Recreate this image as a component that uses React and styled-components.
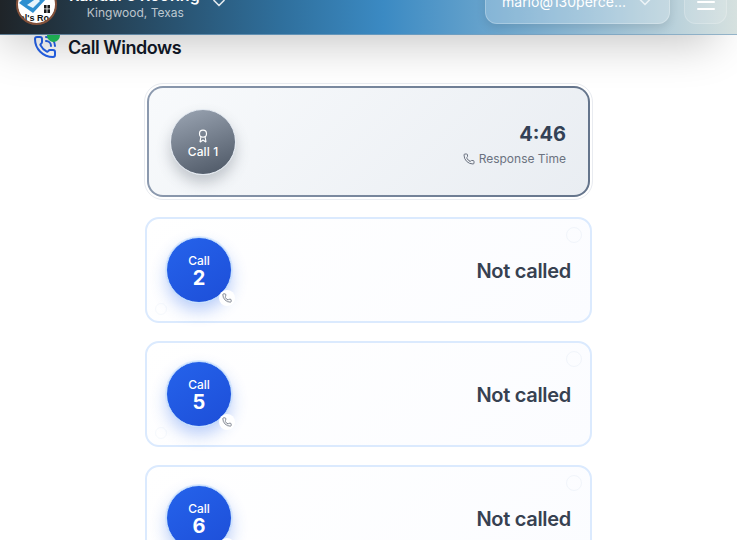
import React from "react";
import styled, { createGlobalStyle } from "styled-components";
import { Award, ChevronDown, Menu, Phone, PhoneCall } from "lucide-react";

const GlobalStyle = createGlobalStyle`
  html, body {
    margin: 0;
    height: 100%;
    overflow: hidden;
    background: #fff;
    font-family: Inter, "Liberation Sans", sans-serif;
  }
`;

const calls = [
  { id: 2, status: "Not called" },
  { id: 5, status: "Not called" },
  { id: 6, status: "Not called" },
];

const Logo = () => (
  <LogoWrap>
    <svg width="41" height="41" viewBox="0 0 41 41">
      <defs>
        <clipPath id="logoClip">
          <circle cx="20.5" cy="20.5" r="19" />
        </clipPath>
      </defs>
      <g clipPath="url(#logoClip)">
        <rect width="41" height="41" fill="#fff" />
        <path d="M3 19 L20 2 L31 14 L17 29 Z" fill="#2f8fd0" />
        <path d="M11 21 L21 14 L24 17 L17 24 Z" fill="#e8f4fb" />
        <rect x="28" y="21" width="6" height="8" fill="#1a1a1a" />
        <rect x="30.6" y="21" width="0.8" height="8" fill="#fff" />
        <rect x="28" y="24.5" width="6" height="0.8" fill="#fff" />
        <text x="33" y="37.2" textAnchor="end" fontFamily="Liberation Sans" fontWeight="700" fontSize="9" fill="#111">dal's Ro</text>
      </g>
      <circle cx="20.5" cy="20.5" r="19.5" fill="none" stroke="#84513a" strokeWidth="2" />
    </svg>
  </LogoWrap>
);

export default function App() {
  return (
    <>
      <GlobalStyle />
      <Page>
        <Header>
          <Logo />
          <Company>
            <NameRow>
              <CompanyName>Randal's Roofing</CompanyName>
              <NameChevron size={20} />
            </NameRow>
            <Location>Kingwood, Texas</Location>
          </Company>
          <Spacer />
          <UserPill>
            <Email>mario@130perce...</Email>
            <ChevronDown size={20} color="rgba(255,255,255,0.7)" />
          </UserPill>
          <MenuButton>
            <Menu size={24} />
          </MenuButton>
        </Header>
        <SectionTitle>
          <TitleIcon>
            <PhoneCall size={24} color="#2563eb" />
            <GreenDot />
          </TitleIcon>
          Call Windows
        </SectionTitle>
        <CardList>
          <ActiveCardRing>
            <ActiveCard>
              <GrayCircle>
                <Award size={14} />
                <span>Call 1</span>
              </GrayCircle>
              <ResponseInfo>
                <ResponseValue>4:46</ResponseValue>
                <ResponseLabel>
                  <Phone size={12} />
                  Response Time
                </ResponseLabel>
              </ResponseInfo>
            </ActiveCard>
          </ActiveCardRing>
          {calls.map((call) => (
            <CallCard key={call.id}>
              <CornerDot />
              <BottomDot />
              <BlueCircle>
                <CallWord>Call</CallWord>
                <CallNumber>{call.id}</CallNumber>
                <PhoneBadge>
                  <Phone size={10} />
                </PhoneBadge>
              </BlueCircle>
              <Status>{call.status}</Status>
            </CallCard>
          ))}
        </CardList>
      </Page>
    </>
  );
}

const Page = styled.div`
  height: 540px;
  overflow: hidden;
`;

/* the page is scrolled down: most of the header sits above the window */
const Header = styled.header`
  position: relative;
  z-index: 2;
  height: 105px;
  margin-top: -70px;
  box-sizing: border-box;
  display: flex;
  align-items: flex-end;
  padding: 0 10px 11px 16px;
  background: linear-gradient(90deg, #1f2428 0%, #2f6f9c 38%, #3b8ac3 52%, #8cb8d4 78%, #d6e1df 100%);
  border-bottom: 1px solid rgba(120, 160, 190, 0.7);
  box-shadow: -10px 20px 45px -12px rgba(0, 0, 0, 0.23);
`;

const LogoWrap = styled.div`
  width: 41px;
  height: 41px;
  flex: none;
  margin-bottom: -2px;
`;

const Company = styled.div`
  margin-left: 12px;
  display: flex;
  flex-direction: column;
  align-items: center;
  color: #fff;
`;

const NameRow = styled.div`
  display: flex;
  align-items: center;
  gap: 9px;
`;

const NameChevron = styled(ChevronDown)`
  margin-bottom: -15px;
  color: rgba(255, 255, 255, 0.85);
`;

const CompanyName = styled.div`
  font-size: 16px;
  line-height: 20px;
  font-weight: 600;
`;

const Location = styled.div`
  font-size: 12px;
  line-height: 16px;
  margin: 0 27px 2px 0;
  color: rgba(255, 255, 255, 0.7);
`;

const Spacer = styled.div`
  flex: 1;
`;

const UserPill = styled.div`
  width: 185px;
  height: 48px;
  box-sizing: border-box;
  margin-bottom: -1px;
  padding: 3px 14px 0 16px;
  display: flex;
  align-items: center;
  justify-content: space-between;
  color: #fff;
  border-radius: 12px;
  background: rgba(255, 255, 255, 0.2);
  border: 1px solid rgba(255, 255, 255, 0.25);
  box-shadow: 0 4px 10px rgba(0, 0, 0, 0.1);
`;

const Email = styled.span`
  font-size: 14px;
`;

const MenuButton = styled.div`
  width: 43px;
  height: 48px;
  margin: 0 0 -1px 14px;
  padding-top: 3px;
  box-sizing: border-box;
  display: flex;
  align-items: center;
  justify-content: center;
  color: #fff;
  border-radius: 12px;
  background: rgba(255, 255, 255, 0.12);
  border: 1px solid rgba(255, 255, 255, 0.2);
`;

const SectionTitle = styled.div`
  display: flex;
  align-items: center;
  gap: 11px;
  height: 24px;
  padding-left: 33px;
  font-size: 18px;
  font-weight: 600;
  letter-spacing: -0.45px;
  color: #111827;
`;

const TitleIcon = styled.div`
  position: relative;
  width: 24px;
  height: 24px;
`;

const GreenDot = styled.span`
  position: absolute;
  top: -6px;
  right: -3px;
  width: 13px;
  height: 13px;
  border-radius: 50%;
  background: #22c55e;
`;

const CardList = styled.div`
  position: relative;
  width: 447px;
  margin: 24px auto 0;
  display: flex;
  flex-direction: column;
  gap: 18px;
`;

const ActiveCardRing = styled.div`
  padding: 2px;
  margin: 0 -1px -1px;
  border-radius: 19px;
  background: #fff;
  border: 1px solid #e8ebf0;
`;

const ActiveCard = styled.div`
  height: 111px;
  box-sizing: border-box;
  padding: 0 22px 0 21px;
  display: flex;
  align-items: center;
  justify-content: space-between;
  border-radius: 16px;
  border: 2px solid transparent;
  background:
    linear-gradient(135deg, #f8fafc, #e9edf2) padding-box,
    linear-gradient(90deg, #8b99ae, #64748b) border-box;
`;

const Circle = styled.div`
  position: relative;
  display: flex;
  flex-direction: column;
  align-items: center;
  justify-content: center;
  border-radius: 50%;
  color: #fff;
  flex: none;
`;

const GrayCircle = styled(Circle)`
  width: 66px;
  height: 66px;
  box-sizing: border-box;
  padding-top: 5px;
  gap: 1px;
  font-size: 12px;
  font-weight: 500;
  line-height: 16px;
  letter-spacing: 0.1px;
  background: linear-gradient(160deg, #9ca6b4, #4b5563);
  border: 1px solid #e2e8f0;
  box-shadow: 0 8px 14px rgba(75, 85, 99, 0.3);
`;

const ResponseInfo = styled.div`
  display: flex;
  flex-direction: column;
  align-items: flex-end;
  gap: 3px;
  margin-top: 4px;
`;

const ResponseValue = styled.div`
  font-size: 20px;
  line-height: 28px;
  font-weight: 700;
  color: #334155;
`;

const ResponseLabel = styled.div`
  display: flex;
  align-items: center;
  gap: 4px;
  font-size: 12px;
  line-height: 16px;
  color: #6b7280;
`;

const CallCard = styled.div`
  position: relative;
  height: 106px;
  flex: none;
  box-sizing: border-box;
  padding: 0 19px;
  display: flex;
  align-items: center;
  justify-content: space-between;
  border-radius: 14px;
  border: 2px solid #dbeafe;
  background: linear-gradient(135deg, #ffffff, #fbfcff);
`;

const CornerDot = styled.span`
  position: absolute;
  top: 8px;
  right: 8px;
  width: 16px;
  height: 16px;
  box-sizing: border-box;
  border-radius: 50%;
  border: 1px solid #f1f5fb;
`;

const BottomDot = styled.span`
  position: absolute;
  left: 8px;
  bottom: 6px;
  width: 12px;
  height: 12px;
  border-radius: 50%;
  border: 1px solid #f6f9fd;
  box-sizing: border-box;
`;

const BlueCircle = styled(Circle)`
  width: 66px;
  height: 66px;
  box-sizing: border-box;
  background: linear-gradient(145deg, #2563eb, #1d4ed8);
  border: 1px solid #bfdbfe;
  box-shadow: 0 0 0 1px rgba(191, 219, 254, 0.5), 0 8px 16px rgba(37, 99, 235, 0.3);
`;

const CallWord = styled.span`
  margin-top: 1px;
  font-size: 12px;
  line-height: 14px;
  font-weight: 500;
`;

const CallNumber = styled.span`
  font-size: 20px;
  line-height: 20px;
  font-weight: 700;
`;

const PhoneBadge = styled.span`
  position: absolute;
  right: -4px;
  bottom: -4px;
  width: 16px;
  height: 16px;
  display: flex;
  align-items: center;
  justify-content: center;
  border-radius: 50%;
  background: #fff;
  color: #6b7280;
`;

const Status = styled.div`
  margin-top: 2px;
  font-size: 20px;
  line-height: 28px;
  font-weight: 600;
  letter-spacing: -0.3px;
  color: #374151;
`;
